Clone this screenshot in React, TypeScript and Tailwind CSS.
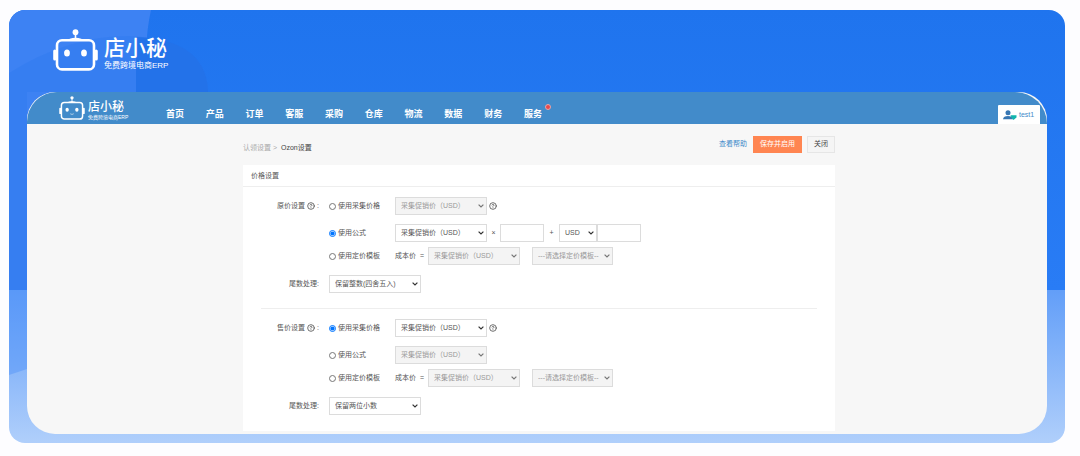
import { CircleHelp } from "lucide-react";

const navItems = ["首页", "产品", "订单", "客服", "采购", "仓库", "物流", "数据", "财务", "服务"];

function Robot({ className, smile }: { className: string; smile?: boolean }) {
  return (
    <svg className={className} viewBox="0 0 45 42" fill="none" stroke="white" strokeLinecap="round">
      <circle cx="22.5" cy="3.2" r="2.9" fill="white" stroke="none" />
      <path d="M22.5 5v6" strokeWidth="1.6" />
      <path d="M17 10.5q5.5-2 11 0" strokeWidth="1.6" />
      <rect x="4" y="11.2" width="37" height="29.2" rx="5" strokeWidth="2.6" />
      <path d="M1.8 22v8M43.200 22v8" strokeWidth="3.2" />
      <ellipse cx="14" cy="24" rx="2.9" ry="3.6" fill="white" stroke="none" />
      <ellipse cx="31" cy="24" rx="2.9" ry="3.6" fill="white" stroke="none" />
      {smile && <path d="M20 31.500q2.500 2 5 0" strokeWidth="1.400" strokeOpacity=".7" />}
    </svg>
  );
}

function Select({ options, label, className, disabled }: { options: string[]; label: string; className: string; disabled?: boolean }) {
  return (
    <div className={`relative ${className}`}>
      <select
        aria-label={label}
        disabled={disabled}
        className="block h-[18px] w-full appearance-none border border-[#dcdcdc] bg-white pl-[5px] text-[7px] text-[#555] disabled:bg-[#f4f4f4] disabled:text-[#999] disabled:opacity-100"
      >
        {options.map((option) => (
          <option key={option}>{option}</option>
        ))}
      </select>
      <svg
        className="pointer-events-none absolute top-[7px] right-[3px] h-[4px] w-[6px]"
        viewBox="0 0 6 4"
        fill="none"
        stroke={disabled ? "#777" : "#333"}
        strokeWidth="1.2"
      >
        <path d="M.6.6 3 3 5.4.6" />
      </svg>
    </div>
  );
}

function Help() {
  return <CircleHelp className="size-2 shrink-0 text-[#555]" strokeWidth={2.5} />;
}

function Option({ name, text, checked }: { name: string; text: string; checked?: boolean }) {
  return (
    <label className="flex w-[66px] shrink-0 items-center gap-[2px]">
      <input type="radio" name={name} defaultChecked={checked} className="m-0 size-[7px]" />
      {text}
    </label>
  );
}

function TextBox({ label }: { label: string }) {
  return <input aria-label={label} className="h-[18px] w-[44px] border border-[#dcdcdc] bg-white px-1 text-[7px]" />;
}

type SectionProps = { title: string; name: string; formula?: boolean; rounding: string };

function PriceSection({ title, name, formula, rounding }: SectionProps) {
  return (
    <div>
      <div className="flex h-[18px] items-center">
        <div className="mr-[10px] flex w-[76px] items-center justify-end gap-[2px]">
          {title}
          <Help />:
        </div>
        <Option name={name} text="使用采集价格" checked={!formula} />
        <Select label="采集价格" options={["采集促销价（USD）"]} className="mr-[2px] w-[92px]" disabled={formula} />
        <Help />
      </div>
      <div className="mt-[9px] ml-[86px] flex h-[18px] items-center">
        <Option name={name} text="使用公式" checked={formula} />
        <Select label="公式价格" options={["采集促销价（USD）"]} className="w-[92px]" disabled={!formula} />
        {formula && (
          <>
            <span className="w-[13px] text-center">×</span>
            <TextBox label="倍数" />
            <span className="w-[15px] text-center">+</span>
            <Select label="币种" options={["USD"]} className="w-[38px]" />
            <TextBox label="加价" />
          </>
        )}
      </div>
      <div className="mt-[5px] ml-[86px] flex h-[18px] items-center">
        <Option name={name} text="使用定价模板" />
        <span className="w-[33px]">成本价&nbsp; =</span>
        <Select label="成本价" options={["采集促销价（USD）"]} className="mr-[12px] w-[92px]" disabled />
        <Select label="定价模板" options={["---请选择定价模板--"]} className="w-[81px]" disabled />
      </div>
      <div className="mt-[10px] flex h-[18px] items-center">
        <div className="mr-[10px] w-[76px] text-right">尾数处理:</div>
        <Select label="尾数处理" options={[rounding]} className="w-[92px]" />
      </div>
    </div>
  );
}

export default function App() {
  return (
    <div className="bg-[#fdfdff] pt-[10px] pr-[15px] pb-[13px] pl-[9px] font-['Liberation_Sans','Noto_Sans_CJK_SC',sans-serif] text-[7px] leading-[10px] text-[#555]">
      <div className="relative overflow-hidden rounded-[16px] bg-[linear-gradient(#1f74ee_0px,#297cf5_280px,#629ef8_280px,#b0cffb_100%)] px-[18px] pb-[9px]">
        {/* tinted shapes behind the logo and down the left edge */}
        <svg className="absolute top-0 left-0 h-[433px] w-[220px]" viewBox="0 0 220 433" fill="none">
          <path d="M0 0h142q-4 18-5 40l-9 20v30L100 280H0z" fill="#3d82f3" />
          <path d="M0 63Q60 25 122 26q77 4 77 56v30H127V82 H18v198H0z" fill="#2f7af0" fillOpacity=".45" />
          <path d="M127 27q74 3 72 60h-72z" fill="#2372e9" />
          <path d="M0 280h18v79L0 365z" fill="#4f92f8" fillOpacity=".45" />
        </svg>
        <div className="relative flex h-[82px] items-start gap-[6px] pt-[19px] pl-[26px] text-white">
          <Robot className="h-[42px] w-[45px]" />
          <div className="pt-[6px]">
            <p className="text-[21px] leading-[26px] font-medium">店小秘</p>
            <p className="text-[8px] leading-[10px]">免费跨境电商ERP</p>
          </div>
        </div>

        <div className="relative overflow-hidden rounded-[28px] bg-[#f7f7f7]">
          <header className="flex h-8 items-center rounded-tl-[30px] rounded-tr-[32px] bg-[#428bca] pl-8 text-white">
            <Robot className="h-6 w-[26px]" smile />
            <div className="ml-[3px] w-[78px] pt-[3px]">
              <p className="text-[12px] leading-[14px] font-medium">店小秘</p>
              <p className="text-[5px] leading-[6px]">免费跨境电商ERP</p>
            </div>
            <nav className="flex w-[376px] justify-between pt-[11px] text-[9px] leading-[12px] font-bold">
              {navItems.map((item) => (
                <a key={item} href="#" className="relative">
                  {item}
                  {item === "服务" && (
                    <span className="absolute -top-1 -right-[9px] size-[6px] rounded-full border border-[#e9a6a6] bg-[#e8484d]"></span>
                  )}
                </a>
              ))}
            </nav>
            <a href="#" className="mt-auto mr-[7px] ml-auto flex h-[19px] w-[42px] items-center gap-[2px] rounded-t-[1px] bg-white pl-[5px] text-[#428bca]">
              <svg className="h-[10px] w-[14px]" viewBox="0 0 14 10">
                <circle cx="5" cy="2.800" r="2.500" fill="#3877b3" />
                <path d="M0 9.200Q.5 6 5 6t5 3.200z" fill="#3877b3" />
                <path d="M7.500 5.200h6v2.300L10.500 10 8.500 7.500z" fill="#11b5ad" />
              </svg>
              test1
            </a>
          </header>

          <main className="pb-[3px] pl-1">
            <div className="mx-auto max-w-[592px]">
              <div className="flex h-[41px] items-center pb-[1px]">
                <p className="mt-[8px] mr-auto text-[#aaa]">
                  认领设置 &gt; <span className="ml-[2px] text-[#444]">Ozon设置</span>
                </p>
                <a href="#" className="mr-[6px] text-[#428bca]">查看帮助</a>
                <button className="mr-[5px] h-[17px] w-[49px] bg-[#ff8551] text-white">保存并启用</button>
                <button className="h-[17px] w-[28px] border border-[#e6e6e6] bg-[#f5f5f5] text-[#444]">关闭</button>
              </div>
              <section className="bg-white">
                <h1 className="border-b border-[#eee] px-2 py-[5px] leading-[11px]">价格设置</h1>
                <div className="pt-[10px] pb-4">
                  <PriceSection title="原价设置" name="original" rounding="保留整数(四舍五入)" formula />
                  <hr className="mx-[18px] mt-[15px] mb-[10px] border-[#eee]" />
                  <PriceSection title="售价设置" name="sale" rounding="保留两位小数" />
                </div>
              </section>
            </div>
          </main>
        </div>
      </div>
    </div>
  );
}
